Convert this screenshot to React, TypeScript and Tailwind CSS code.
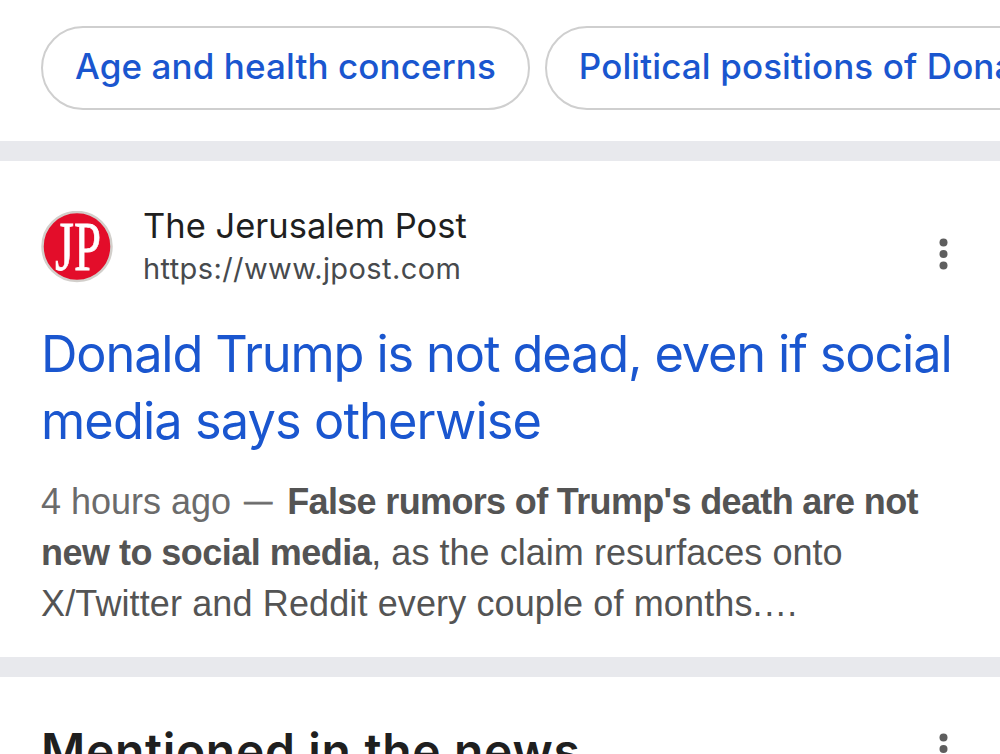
import type { ReactNode } from 'react';

const chips = ['Age and health concerns', 'Political positions of Donald Trump'];

function MoreDots() {
  return (
    <svg width="10" height="32" viewBox="0 0 10 32" fill="#5e5e5e" className="block shrink-0">
      <circle cx="5.5" cy="4.5" r="4" />
      <circle cx="5.5" cy="16" r="4" />
      <circle cx="5.5" cy="27.5" r="4" />
    </svg>
  );
}

function Chip({ children }: { children: ReactNode }) {
  return (
    <button className="h-[84px] shrink-0 rounded-full border-2 border-[#cfcfcf] pr-[32px] pb-[3px] pl-[32px] text-[35px] font-medium tracking-[0.1px] whitespace-nowrap text-[#1a56cf]">
      {children}
    </button>
  );
}

function SiteLogo() {
  return (
    <svg width="72" height="72" viewBox="0 0 72 72" className="block shrink-0">
      <circle cx="36" cy="35.5" r="34.5" fill="#e30d2a" stroke="#d2cfcb" strokeWidth="2.5" />
      <text
        x="14"
        y="59"
        fontFamily="'Liberation Serif', serif"
        fontSize="70"
        fill="#fff"
        stroke="#fff"
        strokeWidth="0.8"
        textLength="46"
        lengthAdjust="spacingAndGlyphs"
      >
        JP
      </text>
    </svg>
  );
}

function Divider() {
  return <div className="h-5 shrink-0 bg-[#e8e9ed]" />;
}

export default function App() {
  return (
    <div className="flex h-[754px] w-[1000px] flex-col overflow-hidden bg-white font-['Inter',sans-serif]">
      <div className="flex h-[141px] shrink-0 gap-[15px] overflow-hidden pt-[26px] pl-[41px]">
        {chips.map((chip) => (
          <Chip key={chip}>{chip}</Chip>
        ))}
      </div>
      <Divider />

      <article className="flex h-[496px] shrink-0 flex-col pt-[43px] pl-[41px]">
        <div className="flex">
          <div className="flex pt-[7px]">
            <SiteLogo />
          </div>
          <div className="ml-[30px] flex-1">
            <div className="text-[34.5px] leading-[43px] text-[#1f1f1f]">
              <span>The Jerusalem Post</span>
            </div>
            <div className="text-[29px] leading-[43px] text-[#474a4d]">
              <span className="tracking-[0.4px]">https://www.jpost.com</span>
            </div>
          </div>
          <div className="mr-[52px] flex pt-[34px]">
            <MoreDots />
          </div>
        </div>

        <h3 className="mt-[30px] text-[50.5px] leading-[67px] whitespace-nowrap text-[#1a56cf]">
          <span className="tracking-[-1.14px]">Donald Trump is not dead, even if social</span>
          <br />
          <span className="tracking-[-0.9px]">media says otherwise</span>
        </h3>

        <p className="mt-[22px] font-['Liberation_Sans',sans-serif] text-[36px] leading-[51px] whitespace-nowrap text-[#545454]">
          <span className="text-[#6b6b6b]">
            4 hours ago <span className="mr-[5px] ml-[3px] align-[4px] text-[28px] leading-none [-webkit-text-stroke:0.8px_#6b6b6b]">—</span>{' '}
          </span>
          <b className="tracking-[-0.65px]">False rumors of Trump's death are not</b>
          <br />
          <b className="tracking-[-0.52px]">new to social media</b>
          <span className="tracking-[0.04px]">, as the claim resurfaces onto</span>
          <br />
          <span className="tracking-[0.12px]">X/Twitter and Reddit every couple of months.…</span>
        </p>
      </article>
      <Divider />

      <div className="flex flex-1 justify-between overflow-hidden pt-[46px] pl-[41px]">
        <h2 className="text-[48px] leading-[56px] font-semibold tracking-[0.68px] whitespace-nowrap text-[#1f1f1f]">Mentioned in the news</h2>
        <div className="mr-[52px] pt-[10px]">
          <MoreDots />
        </div>
      </div>
    </div>
  );
}
